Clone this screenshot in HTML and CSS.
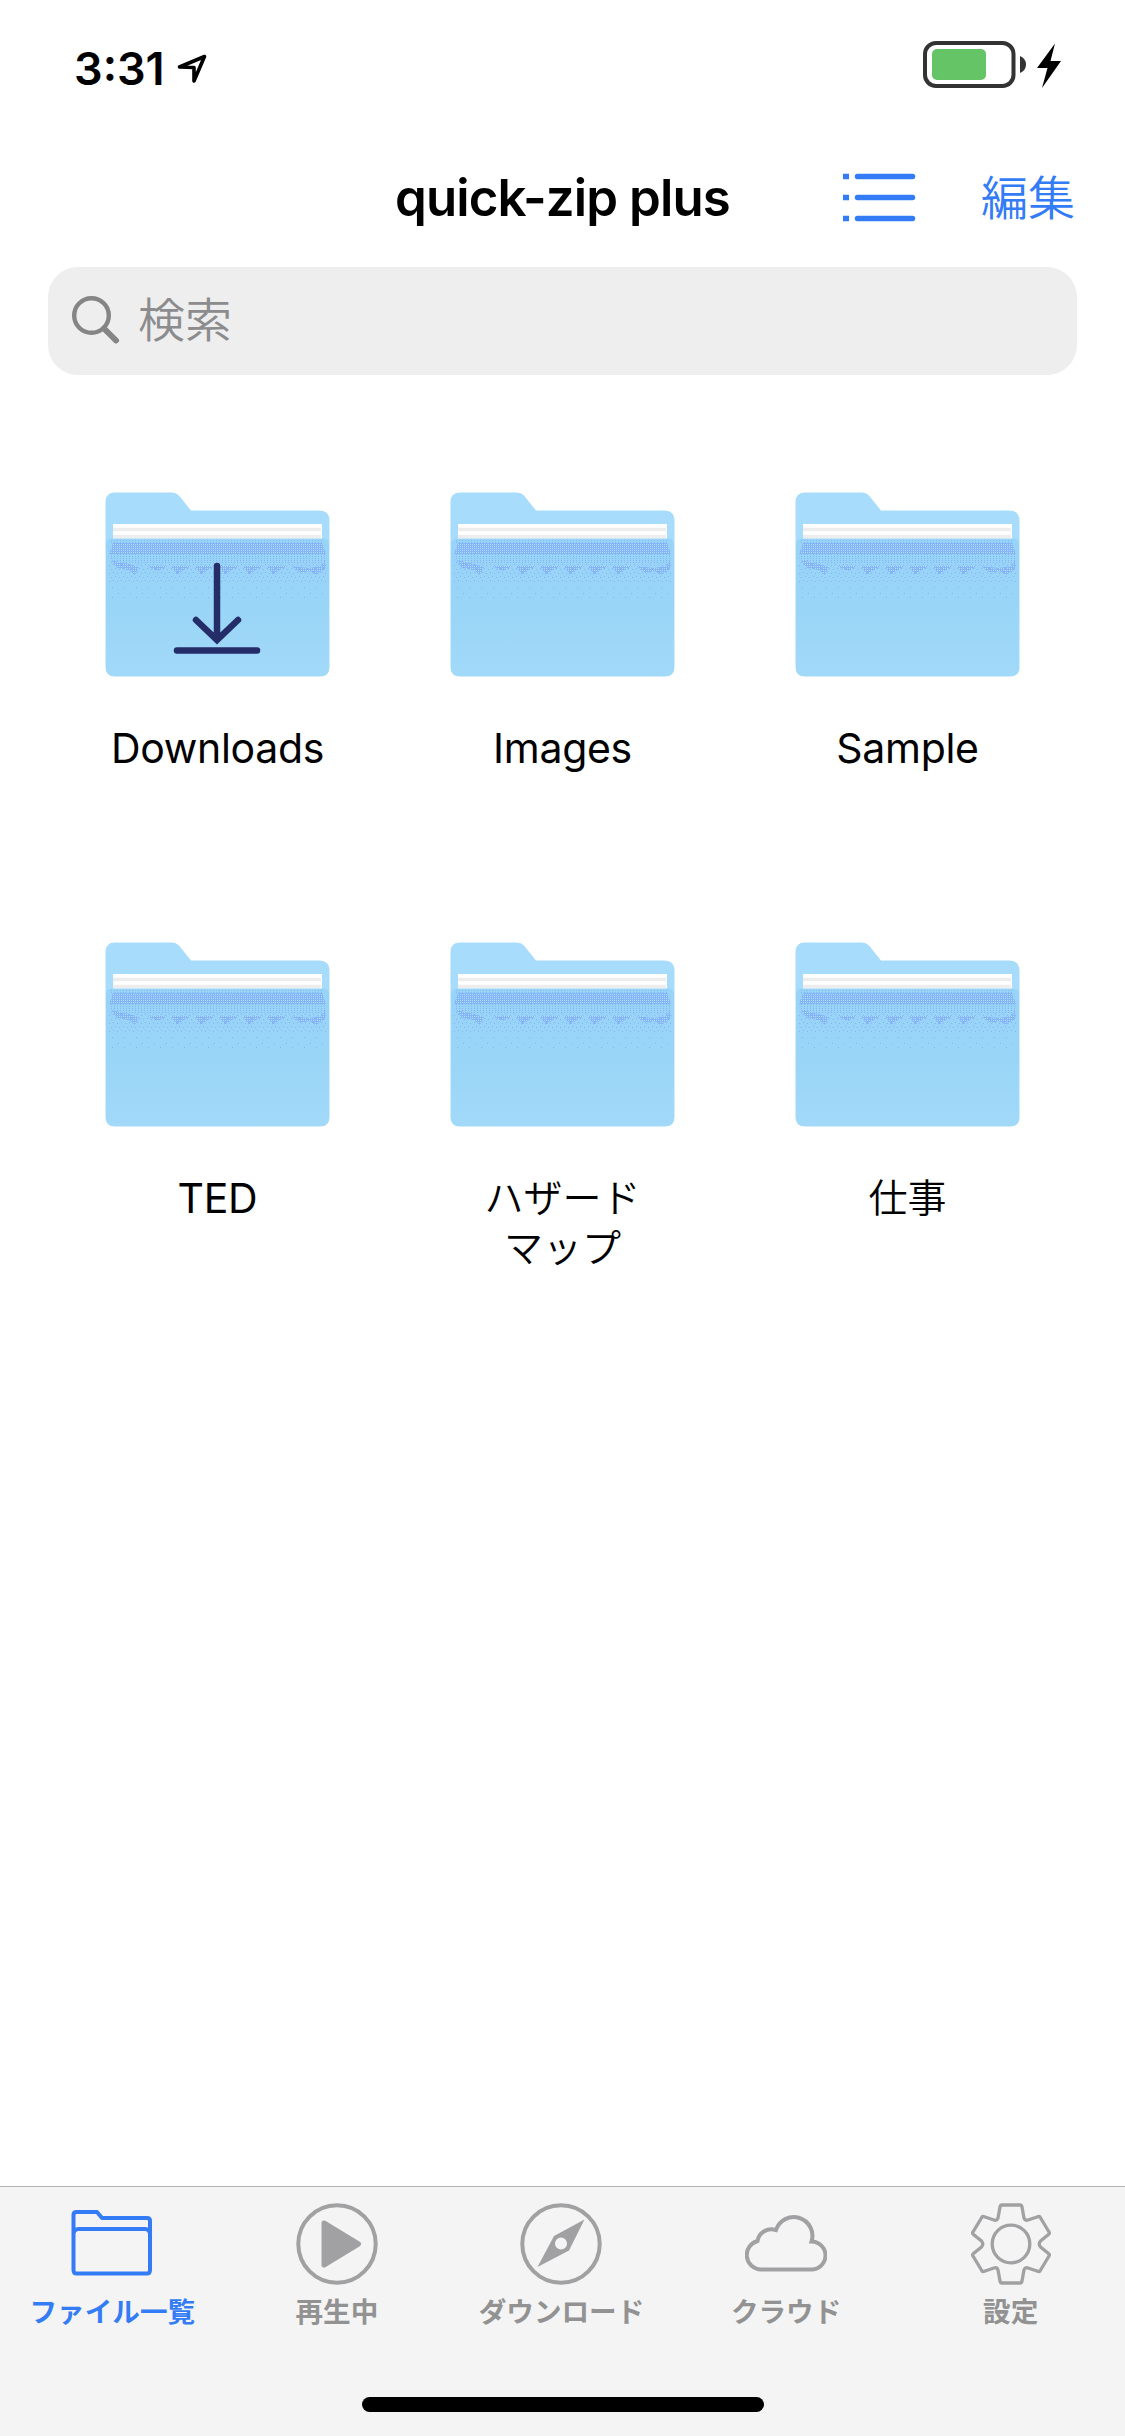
FILE: index.html
```html
<!DOCTYPE html>
<html lang="ja">

<head>
    <meta charset="UTF-8">
    <meta name="viewport" content="width=device-width, initial-scale=1.0">
    <title>quick-zip plus</title>
    <link rel="stylesheet" href="styles.css">
</head>

<body>
    <!-- folder shapes, reused in the list -->
    <svg class="defs" width="0" height="0">
        <defs>
            <linearGradient id="back" x1="0" y1="0" x2="0" y2="1">
                <stop offset="0" stop-color="#a8dcfc" />
                <stop offset="1" stop-color="#a4daf9" />
            </linearGradient>
            <linearGradient id="front" x1="0" y1="0" x2="0" y2="1">
                <stop offset="0" stop-color="#98d3f8" />
                <stop offset="0.5" stop-color="#99d5f7" />
                <stop offset="1" stop-color="#a2d9f9" />
            </linearGradient>
            <!-- dotted shadow under the papers -->
            <pattern id="dense" width="2" height="2" patternUnits="userSpaceOnUse">
                <rect width="2" height="2" fill="#84b5f7" />
                <rect width="1" height="1" fill="#aedcf8" />
            </pattern>
            <pattern id="medium" width="3" height="2" patternUnits="userSpaceOnUse">
                <rect width="1" height="1" fill="#84b5f7" />
            </pattern>
            <pattern id="light" width="8" height="8" patternUnits="userSpaceOnUse">
                <path d="M0 0h1v1h-1zM4 1h1v1h-1zM2 4h1v1h-1zM6 5h1v1h-1z" fill="#84b5f7" />
            </pattern>
            <pattern id="sparse" width="12" height="10" patternUnits="userSpaceOnUse">
                <path d="M1 1h1v1h-1zM7 5h1v1h-1z" fill="#84b5f7" />
            </pattern>
        </defs>
        <symbol id="folder" viewBox="0 0 225 186">
            <path d="M10 .5H67Q71 .5 74 3.500L86 18.500H214Q224.500 18.500 224.500 29V175Q224.500 184.500 215 184.500H10Q.5 184.500 .5 175V10Q.5 .5 10 .5Z" fill="url(#back)" />
            <rect x="8" y="32" width="209" height="15" fill="#fff" />
            <path d="M8 37.500H216M8 44.500H216" stroke="#ededed" stroke-width="3.500" />
            <path d="M7 46.500H218Q224 46.500 224 53V175Q224 184 215 184H10Q1 184 1 175V53Q1 46.500 7 46.500Z" fill="url(#front)" />
            <path d="M6 47H219V51H6ZM5 62H221V71H5Z" fill="url(#medium)" />
            <path d="M8 51H217L221 62H4Z" fill="url(#dense)" />
            <path d="M6 68L20 71L34 75L30 83L24 78L12 76ZM42 74H62L53 79L48 77ZM66 74H86L77 79L72 83ZM90 74H110L101 79L96 83ZM114 74H134L125 79L120 83ZM138 74H158L149 79L144 83ZM162 74H182L173 79L168 83ZM186 74L204 76L216 74L220 68V77L211 83L204 79L196 81Z" fill="url(#dense)" />
            <path d="M4 71H221V92H4Z" fill="url(#light)" />
            <path d="M4 92H221V107H4Z" fill="url(#sparse)" />
        </symbol>
    </svg>

    <div class="status">
        <span class="time">3:31</span>
        <svg class="location" width="32" height="32" viewBox="0 0 32 32">
            <path d="M3.500 15L28.500 4.500L18 29V15.500Z" fill="none" stroke="#000" stroke-width="3.600" stroke-linejoin="round" />
        </svg>
        <svg class="battery" width="140" height="50" viewBox="0 0 140 50">
            <rect x="2" y="3" width="88.500" height="43" rx="11" fill="none" stroke="#333" stroke-width="4" />
            <rect x="9" y="9" width="54" height="31" rx="5" fill="#65c466" />
            <path d="M97 16Q103 18.500 103 24.500T97 33Z" fill="#333" />
            <path d="M132 3.500L114 28H124.500L119 48L138 21H127.500Z" fill="#000" />
        </svg>
    </div>

    <div class="nav">
        <h1>quick-zip plus</h1>
        <div class="tools">
            <svg width="74" height="50" viewBox="0 0 74 50">
                <path d="M0 3.500H6M0 24.500H6M0 45.500H6" stroke="#347cf6" stroke-width="5.500" />
                <path d="M14.500 3.500H69.500M14.500 24.500H69.500M14.500 45.500H69.500" stroke="#347cf6" stroke-width="5.500" stroke-linecap="round" />
            </svg>
            <a class="edit">編集</a>
        </div>
    </div>

    <div class="search">
        <svg width="48" height="50" viewBox="0 0 48 50">
            <circle cx="19.500" cy="19.500" r="17.300" fill="none" stroke="#858585" stroke-width="4.400" />
            <path d="M32 32.500L44 44.500" stroke="#858585" stroke-width="6" stroke-linecap="round" />
        </svg>
        <span>検索</span>
    </div>

    <ul class="files">
        <li>
            <svg width="225" height="186" viewBox="0 0 225 186">
                <use href="#folder" />
                <path d="M112 74V147M91 128L112 148L133 128M72 158.500H152" fill="none" stroke="#252d69" stroke-width="6.500" stroke-linecap="round" />
            </svg>
            <p>Downloads</p>
        </li>
        <li>
            <svg width="225" height="186"><use href="#folder" /></svg>
            <p>Images</p>
        </li>
        <li>
            <svg width="225" height="186"><use href="#folder" /></svg>
            <p>Sample</p>
        </li>
        <li>
            <svg width="225" height="186"><use href="#folder" /></svg>
            <p>TED</p>
        </li>
        <li>
            <svg width="225" height="186"><use href="#folder" /></svg>
            <p class="ja">ハザード<br>マップ</p>
        </li>
        <li>
            <svg width="225" height="186"><use href="#folder" /></svg>
            <p class="ja">仕事</p>
        </li>
    </ul>

    <div class="tabbar">
        <ul>
            <li class="active">
                <svg width="82" height="82" viewBox="0 0 82 82">
                    <path d="M2.500 67V12Q2.500 9 5.500 9H26L31 15H76Q79 15 79 18V67Q79 70.500 76 70.500H5.500Q2.500 70.500 2.500 67ZM2.500 31Q3 26 7.500 26H74Q78.500 26 79 31" />
                </svg>
                <span>ファイル一覧</span>
            </li>
            <li>
                <svg width="82" height="82" viewBox="0 0 82 82">
                    <circle cx="41" cy="41" r="38.700" />
                    <path class="fill" d="M28 20L62.500 41L28 62Z" stroke-width="5" />
                </svg>
                <span>再生中</span>
            </li>
            <li>
                <svg width="82" height="82" viewBox="0 0 82 82">
                    <circle cx="41" cy="41" r="38.700" />
                    <path class="solid" fill-rule="evenodd" d="M64.500 16.500L49 47.500L17.500 64L34 33ZM41 34.500A6 6 0 1 0 41 46.500A6 6 0 1 0 41 34.500Z" />
                </svg>
                <span>ダウンロード</span>
            </li>
            <li>
                <svg width="82" height="82" viewBox="0 0 82 82">
                    <path d="M16 66.500A14.500 14.500 0 0 1 12.500 38A14 14 0 0 1 31 27A18.500 18.500 0 0 1 66.500 38.500A14 14 0 0 1 66.500 66.500Z" stroke-linejoin="miter" />
                </svg>
                <span>クラウド</span>
            </li>
            <li>
                <svg width="82" height="82" viewBox="0 0 82 82">
                    <circle cx="41" cy="41" r="18.800" stroke-width="3.300" />
                    <path stroke-width="3.300" d="M32 2H50Q51.500 2 52 4L54 15Q55 18 58 17L67 14Q69 13 70 14L79 29Q80 30 78.500 31.500L70.500 38Q68 41 70.500 44L78.500 50.500Q80 52 79 53L70 68Q69 69 67 68L58 65Q55 64 54 67L52 78Q51.500 80 50 80H32Q30.500 80 30 78L28 67Q27 64 24 65L15 68Q13 69 12 68L3 53Q2 52 3.500 50.500L11.500 44Q14 41 11.500 38L3.500 31.500Q2 30 3 29L12 14Q13 13 15 14L24 17Q27 18 28 15L30 4Q30.500 2 32 2Z" />
                </svg>
                <span>設定</span>
            </li>
        </ul>
        <div class="home"></div>
    </div>
</body>

</html>
```
FILE: styles.css
```css
* {
    margin: 0;
    padding: 0;
    box-sizing: border-box;
}

li {
    list-style: none;
}

body {
    display: flex;
    flex-direction: column;
    width: 1125px;
    height: 2436px;
    background-color: #fff;
    color: #000;
    font-family: Inter, "Noto Sans CJK JP", sans-serif;
}

.defs {
    display: block;
}

svg {
    flex-shrink: 0;
}

/* status bar */
.status {
    display: flex;
    height: 132px;
    padding-left: 74px;
    padding-right: 62px;
}

.time {
    width: 100px;
    padding-top: 44px;
    font-size: 45px;
    font-weight: 600;
    line-height: 50px;
}

.location {
    margin-top: 52px;
    margin-left: 2px;
}

.battery {
    margin-top: 40px;
    margin-left: auto;
}

/* nav */
.nav {
    display: grid;
    grid-template-columns: 1fr auto 1fr;
    align-items: center;
    height: 131px;
    padding: 0 50px;
}

.nav h1 {
    grid-column: 2;
    font-size: 51px;
    font-weight: 600;
    line-height: 60px;
    letter-spacing: -0.9px;
    white-space: nowrap;
}

.tools {
    display: flex;
    align-items: center;
    justify-content: flex-end;
    gap: 64px;
}

.edit {
    padding-bottom: 5px;
    color: #347cf6;
    font-family: "Noto Sans CJK JP", sans-serif;
    font-size: 47px;
    font-weight: 350;
    line-height: 60px;
}

.search {
    display: flex;
    align-items: center;
    gap: 18px;
    height: 108px;
    margin: 4px 48px 0;
    padding-left: 24px;
    border-radius: 30px;
    background-color: #eee;
    color: #8c8c8e;
    font-family: "Noto Sans CJK JP", sans-serif;
    font-size: 47px;
    font-weight: 350;
    line-height: 60px;
}

.search span {
    padding-bottom: 8px;
}

/* folders */
.files {
    display: grid;
    grid-template-columns: repeat(3, 345px);
    grid-auto-rows: 450px;
    flex: 1;
    padding: 117px 45px 0;
}

.files li {
    display: flex;
    flex-direction: column;
    align-items: center;
}

.files p {
    margin-top: 45px;
    font-size: 41px;
    line-height: 50px;
    letter-spacing: -0.3px;
    text-align: center;
}

.files .ja {
    margin-top: 42px;
    font-family: "Noto Sans CJK JP", sans-serif;
    font-size: 39px;
    font-weight: 350;
    letter-spacing: 0;
}

/* tab bar */
.tabbar {
    height: 250px;
    border-top: 1px solid #b2b2b2;
    background-color: #f4f4f4;
}

.tabbar ul {
    display: flex;
    height: 210px;
    padding-top: 16px;
    padding-right: 2px;
}

.tabbar li {
    display: flex;
    flex: 1;
    flex-direction: column;
    align-items: center;
    color: #929292;
    font-family: "Noto Sans CJK JP", sans-serif;
    font-size: 27.6px;
    font-weight: 700;
    line-height: 36px;
}

.tabbar svg {
    margin-bottom: 7px;
    fill: none;
    stroke: #a1a1a3;
    stroke-width: 4;
    stroke-linejoin: round;
}

.tabbar .fill {
    fill: #a1a1a3;
}

.tabbar .solid {
    fill: #a1a1a3;
    stroke: none;
}

.tabbar .active {
    color: #347cf6;
}

.tabbar .active svg {
    stroke: #347cf6;
}

.home {
    width: 402px;
    height: 15px;
    margin: 0 auto;
    border-radius: 8px;
    background-color: #000;
}
```
